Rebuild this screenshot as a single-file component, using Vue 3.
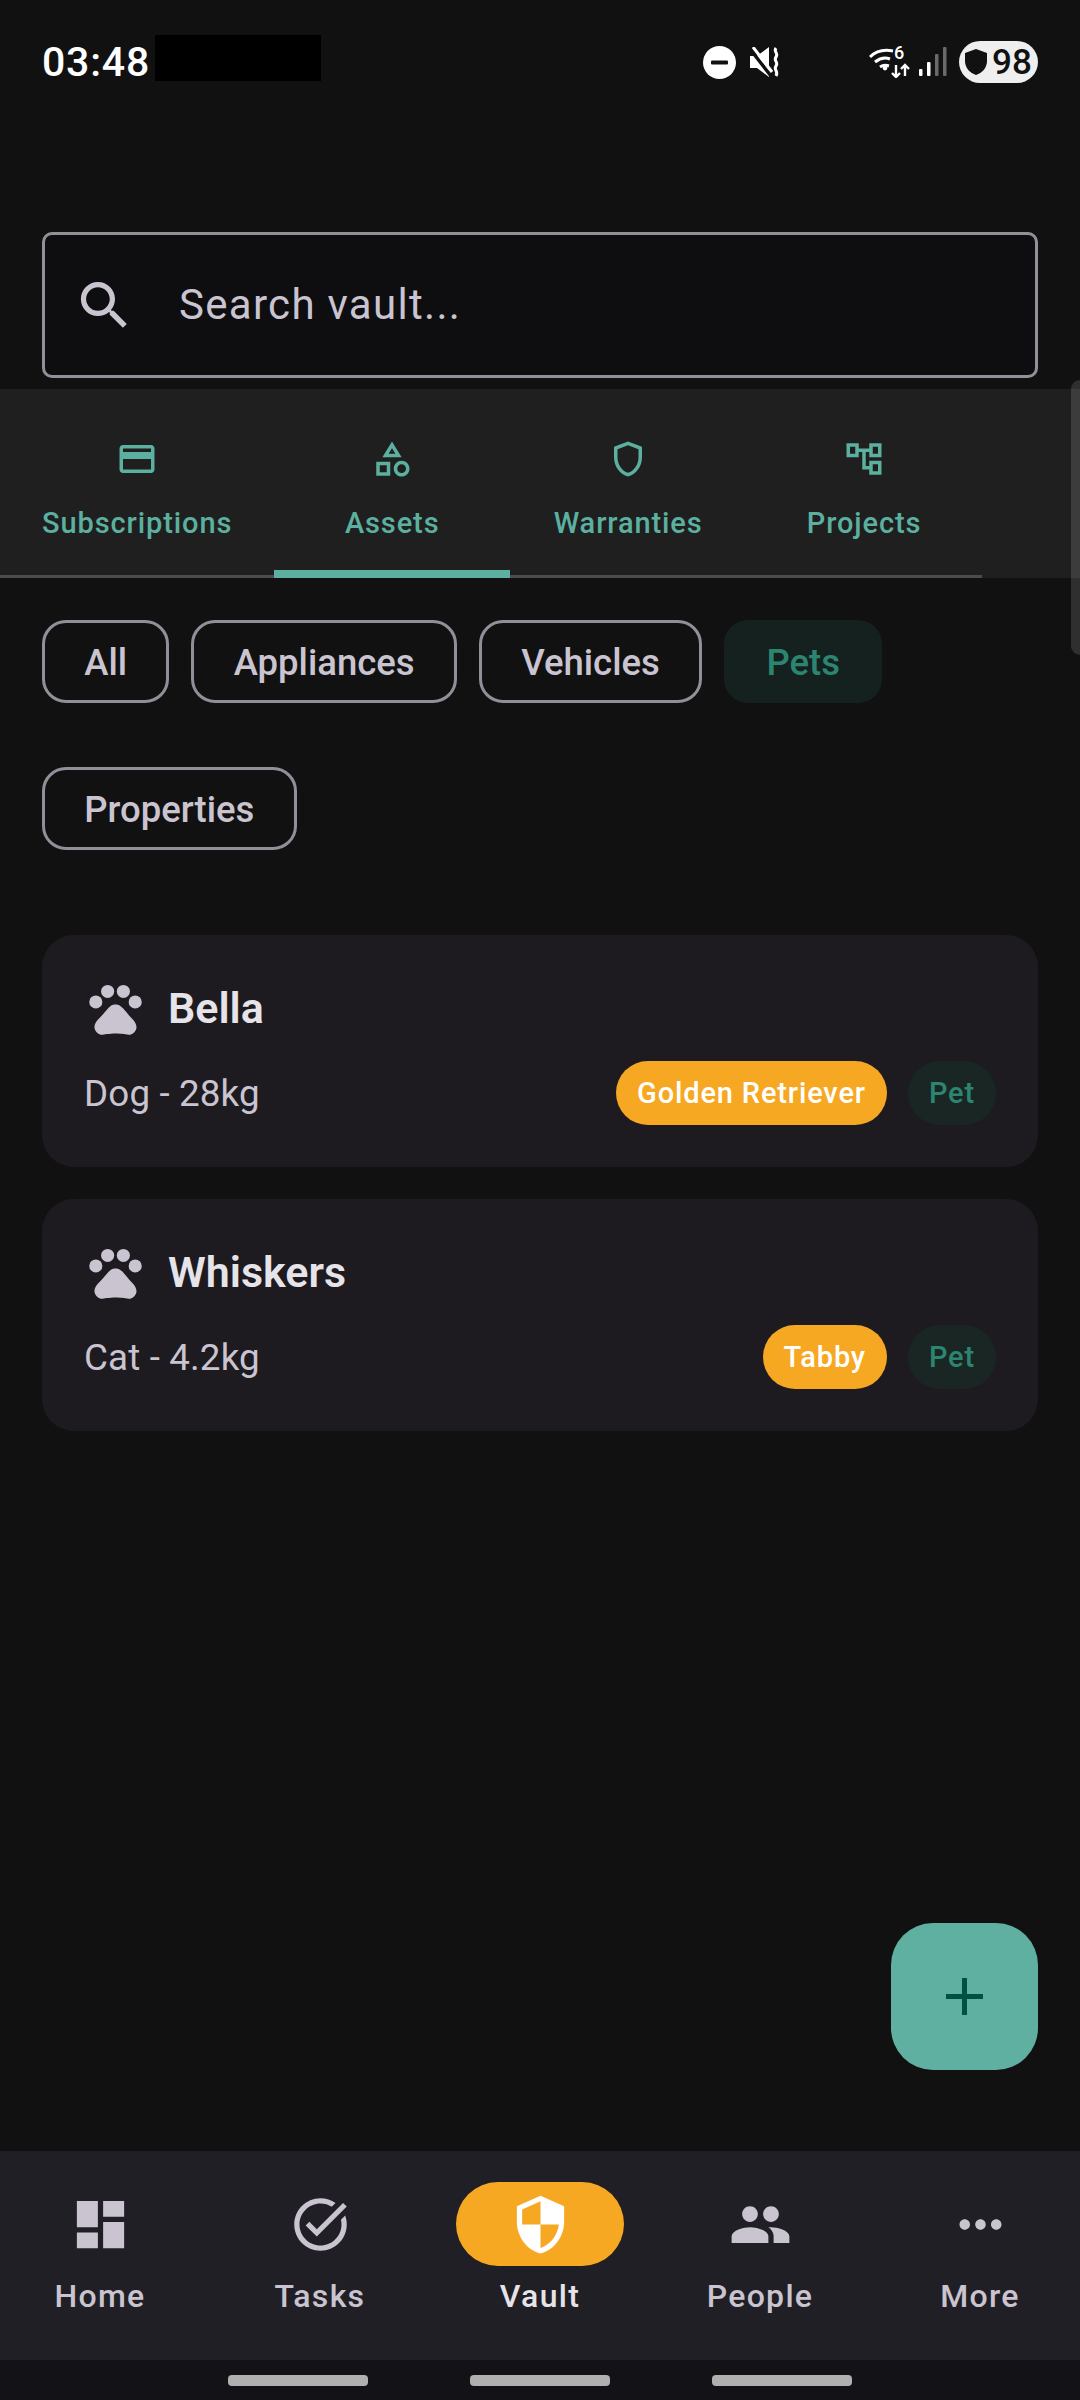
<template>
  <div class="page">
    <!-- status bar -->
    <div class="status">
      <span class="time">03:48</span>
      <span class="redacted"></span>
      <div class="status-right">
        <svg class="dnd" width="33" height="33" viewBox="0 0 33 33">
          <circle cx="16.5" cy="16.5" r="16.5" fill="#fff" />
          <rect x="8" y="14.5" width="17" height="4" rx="1" fill="#111" />
        </svg>
        <svg class="mute" width="30" height="30" viewBox="0 0 30 30">
          <path d="M0 9h7l12-9v30L7 21H0z" fill="#fff" />
          <path d="M0 2l21 27" stroke="#111" stroke-width="3.5" />
          <path d="M3 0l19 25" stroke="#fff" stroke-width="3" />
          <path d="M26 1c-3 4 3 5 0 9s3 5 0 9 3 5 0 10" fill="none" stroke="#fff" stroke-width="3" />
        </svg>
        <div class="wifi-wrap">
          <svg width="42" height="32" viewBox="0 0 42 32">
            <path d="M1 11c6-6 13-8 23-6M6 16c5-4 10-5 15-3M11 21c3-2 6-2 9-1" fill="none" stroke="#fff" stroke-width="3" />
            <circle cx="16" cy="22" r="2.4" fill="#fff" />
            <path d="M27 19v12M23 27l4 4 4-4M36 30V19M32 23l4-4 4 4" fill="none" stroke="#fff" stroke-width="2.4" />
          </svg>
          <span class="wifi-six">6</span>
        </div>
        <svg class="signal" width="28" height="30" viewBox="0 0 28 30">
          <rect x="0" y="22" width="3.5" height="7" rx="1" fill="#fff" />
          <rect x="8" y="15" width="3.5" height="14" rx="1" fill="#fff" />
          <rect x="16" y="7" width="3.5" height="22" rx="1" fill="#6a6a6a" />
          <rect x="24" y="0" width="3.5" height="29" rx="1" fill="#6a6a6a" />
        </svg>
        <div class="battery">
          <svg width="22" height="26" viewBox="0 0 22 26">
            <path d="M11 0l11 4v8c0 7-5 12-11 14C5 24 0 19 0 12V4z" fill="#111" />
          </svg>
          <span>98</span>
        </div>
      </div>
    </div>

    <div class="search">
      <svg class="search-icon" viewBox="0 0 24 24"><path :d="icons.search" /></svg>
      <input type="text" placeholder="Search vault..." />
    </div>

    <div class="tabs-wrap">
      <div class="tabs">
        <div v-for="t in tabs" :key="t.name" class="tab" :class="{ wide: t.wide, active: t.active }">
          <svg viewBox="0 0 24 24"><path :d="t.icon" /></svg>
          <span>{{ t.name }}</span>
        </div>
      </div>
    </div>

    <div class="chips">
      <button v-for="c in chips" :key="c" class="chip" :class="{ selected: c === 'Pets' }">{{ c }}</button>
    </div>

    <div class="cards">
      <div v-for="p in pets" :key="p.name" class="card">
        <div class="card-head">
          <svg viewBox="0 0 24 24">
            <circle cx="4.5" cy="9.5" r="2.5" />
            <circle cx="9" cy="5.5" r="2.5" />
            <circle cx="15" cy="5.5" r="2.5" />
            <circle cx="19.5" cy="9.5" r="2.5" />
            <path :d="icons.pad" />
          </svg>
          <span>{{ p.name }}</span>
        </div>
        <div class="card-foot">
          <span class="desc">{{ p.desc }}</span>
          <span class="badge breed">{{ p.breed }}</span>
          <span class="badge type">Pet</span>
        </div>
      </div>
    </div>

    <div class="spacer"></div>

    <button class="fab">
      <svg width="37" height="37" viewBox="0 0 37 37"><path d="M16 0h5v16h16v5H21v16h-5V21H0v-5h16z" /></svg>
    </button>

    <nav class="nav">
      <div v-for="n in nav" :key="n.name" class="nav-item" :class="{ current: n.current }">
        <div class="nav-icon">
          <svg viewBox="0 0 24 24"><path :d="n.icon" /></svg>
        </div>
        <span>{{ n.name }}</span>
      </div>
    </nav>

    <div class="gesture">
      <i></i><i></i><i></i>
    </div>

    <div class="scrollbar"></div>
  </div>
</template>

<script setup>
const icons = {
  search: 'M15.5 14h-.79l-.28-.27C15.41 12.59 16 11.11 16 9.5 16 5.91 13.09 3 9.5 3S3 5.91 3 9.5 5.91 16 9.5 16c1.61 0 3.09-.59 4.23-1.57l.27.28v.79l5 4.99L20.49 19l-4.99-5zm-6 0C7.01 14 5 11.99 5 9.5S7.01 5 9.5 5 14 7.01 14 9.5 11.99 14 9.5 14z',
  pad: 'M17.34 14.86c-.87-1.02-1.6-1.89-2.48-2.91-.46-.54-1.05-1.08-1.75-1.32-.11-.04-.22-.07-.33-.09-.25-.04-.52-.04-.78-.04s-.53 0-.79.05c-.11.02-.22.05-.33.09-.7.24-1.28.78-1.75 1.32-.87 1.02-1.6 1.89-2.48 2.91-1.31 1.31-2.92 2.76-2.62 4.79.29 1.02 1.02 2.03 2.33 2.32.73.15 3.06-.44 5.54-.44h.18c2.48 0 4.81.58 5.54.44 1.31-.29 2.04-1.31 2.33-2.32.31-2.04-1.3-3.49-2.61-4.8z'
}

const tabs = [
  { name: 'Subscriptions', icon: 'M20 4H4c-1.11 0-1.99.89-1.99 2L2 18c0 1.11.89 2 2 2h16c1.11 0 2-.89 2-2V6c0-1.11-.89-2-2-2zm0 14H4v-6h16v6zm0-10H4V6h16v2z' },
  { name: 'Assets', wide: true, active: true, icon: 'M12 2l-5.5 9h11L12 2zm0 3.84L13.93 9h-3.87L12 5.84zM17.5 13c-2.49 0-4.5 2.01-4.5 4.5s2.01 4.5 4.5 4.5 4.5-2.01 4.5-4.5-2.01-4.5-4.5-4.5zm0 7c-1.38 0-2.5-1.12-2.5-2.5s1.12-2.5 2.5-2.5 2.5 1.12 2.5 2.5-1.12 2.5-2.5 2.5zM3 21.5h8v-8H3v8zm2-6h4v4H5v-4z' },
  { name: 'Warranties', wide: true, icon: 'M12 2L4 5v6.09c0 5.05 3.41 9.76 8 10.91 4.59-1.15 8-5.86 8-10.91V5l-8-3zm6 9.09c0 4-2.55 7.7-6 8.83-3.45-1.13-6-4.82-6-8.83v-4.7l6-2.25 6 2.25v4.7z' },
  { name: 'Projects', wide: true, icon: 'M22 11V3h-7v3H9V3H2v8h7V8h2v10h4v3h7v-8h-7v3h-2V8h2v3h7zM7 9H4V5h3v4zm10 6h3v4h-3v-4zm0-10h3v4h-3V5z' }
]

const chips = ['All', 'Appliances', 'Vehicles', 'Pets', 'Properties']

const pets = [
  { name: 'Bella', desc: 'Dog - 28kg', breed: 'Golden Retriever' },
  { name: 'Whiskers', desc: 'Cat - 4.2kg', breed: 'Tabby' }
]

const nav = [
  { name: 'Home', icon: 'M3 13h8V3H3v10zm0 8h8v-6H3v6zm10 0h8V11h-8v10zm0-18v6h8V3h-8z' },
  { name: 'Tasks', icon: 'M22 5.18L10.59 16.6l-4.24-4.24 1.41-1.41 2.83 2.83 10-10L22 5.18zm-2.21 5.04c.13.57.21 1.17.21 1.78 0 4.42-3.58 8-8 8s-8-3.58-8-8 3.58-8 8-8c1.58 0 3.04.46 4.28 1.25l1.44-1.44C16.1 2.67 14.13 2 12 2 6.48 2 2 6.48 2 12s4.48 10 10 10 10-4.48 10-10c0-1.19-.22-2.33-.6-3.39l-1.61 1.61z' },
  { name: 'Vault', current: true, icon: 'M12 1L3 5v6c0 5.55 3.84 10.74 9 12 5.16-1.26 9-6.45 9-12V5l-9-4zm0 10.99h7c-.53 4.12-3.28 7.79-7 8.94V12H5V6.3l7-3.11v8.8z' },
  { name: 'People', icon: 'M16 11c1.66 0 2.99-1.34 2.99-3S17.66 5 16 5c-1.66 0-3 1.34-3 3s1.34 3 3 3zm-8 0c1.66 0 2.99-1.34 2.99-3S9.66 5 8 5C6.34 5 5 6.34 5 8s1.34 3 3 3zm0 2c-2.33 0-7 1.17-7 3.5V19h14v-2.5c0-2.33-4.67-3.5-7-3.5zm8 0c-.29 0-.62.02-.97.05 1.16.84 1.97 1.97 1.97 3.45V19h6v-2.5c0-2.33-4.67-3.5-7-3.5z' },
  { name: 'More', icon: 'M6 10c-1.1 0-2 .9-2 2s.9 2 2 2 2-.9 2-2-.9-2-2-2zm12 0c-1.1 0-2 .9-2 2s.9 2 2 2 2-.9 2-2-.9-2-2-2zm-6 0c-1.1 0-2 .9-2 2s.9 2 2 2 2-.9 2-2-.9-2-2-2z' }
]
</script>

<style scoped>
.page {
  position: relative;
  display: flex;
  flex-direction: column;
  width: 1080px;
  height: 2400px;
  overflow: hidden;
  background: #111112;
  font-family: Roboto, sans-serif;
  color: #cac4d0;
}

/* status bar */
.status {
  display: flex;
  align-items: center;
  height: 124px;
  padding: 0 42px;
  flex-shrink: 0;
}
.time {
  font-size: 41px;
  font-weight: 500;
  color: #fff;
  letter-spacing: 0.8px;
}
.redacted {
  width: 166px;
  height: 46px;
  margin: -8px 0 0 5px;
  background: #000;
}
.status-right {
  display: flex;
  align-items: center;
  margin-left: auto;
}
.mute { margin-left: 14px; }
.wifi-wrap {
  position: relative;
  width: 42px;
  height: 32px;
  margin-left: 89px;
}
.wifi-wrap svg { display: block; }
.wifi-six {
  position: absolute;
  left: 25px;
  top: -3px;
  font-size: 18px;
  line-height: 20px;
  font-weight: 500;
  color: #fff;
}
.signal { margin-left: 8px; }
.battery {
  display: flex;
  align-items: center;
  gap: 5px;
  width: 79px;
  height: 42px;
  margin-left: 12px;
  padding-left: 6px;
  box-sizing: border-box;
  border-radius: 21px;
  background: #efefef;
  color: #111;
  font-size: 35px;
  font-weight: 500;
}

/* search */
.search {
  display: flex;
  align-items: center;
  gap: 43px;
  height: 146px;
  margin: 108px 42px 0;
  padding-left: 28px;
  box-sizing: border-box;
  flex-shrink: 0;
  border: 3px solid #938f99;
  border-radius: 10px;
  background: #0e0e10;
}
.search-icon {
  width: 63px;
  height: 63px;
  fill: #cac4d0;
}
.search input {
  flex: 1;
  min-width: 0;
  border: 0;
  outline: 0;
  padding: 0 0 2px;
  background: transparent;
  font-family: Roboto, sans-serif;
  font-size: 42px;
  letter-spacing: 1.3px;
  color: #cac4d0;
}
.search input::placeholder {
  color: #cac4d0;
  opacity: 1;
}

/* tabs */
.tabs-wrap {
  height: 189px;
  margin-top: 11px;
  flex-shrink: 0;
  background: #1f1f1f;
}
.tabs {
  display: flex;
  width: 982px;
  height: 189px;
  box-sizing: border-box;
  border-bottom: 3px solid #4c4c4c;
}
.tab {
  position: relative;
  display: flex;
  flex-direction: column;
  align-items: center;
  gap: 23px;
  padding: 49px 42px 0;
  box-sizing: border-box;
  color: #5bb09f;
  font-size: 29px;
  font-weight: 500;
  letter-spacing: 0.9px;
  line-height: 40px;
}
.tab.wide { width: 236px; }
.tab svg {
  width: 42px;
  height: 42px;
  fill: #5bb09f;
}
.tab.active::after {
  content: '';
  position: absolute;
  left: 0;
  right: 0;
  bottom: -3px;
  height: 8px;
  background: #5bb09f;
}

/* filter chips */
.chips {
  display: flex;
  flex-wrap: wrap;
  gap: 64px 22px;
  padding: 42px 42px 0;
  flex-shrink: 0;
}
.chip {
  height: 83px;
  padding: 2px 39.3px 0;
  border: 3px solid #938f99;
  border-radius: 24px;
  background: transparent;
  font-family: Roboto, sans-serif;
  font-size: 36.5px;
  font-weight: 500;
  color: #cac4d0;
}
.chip.selected {
  border-color: #15211e;
  background: #15211e;
  color: #2b8570;
}

/* cards */
.cards {
  display: flex;
  flex-direction: column;
  gap: 32px;
  margin: 85px 42px 0;
  flex-shrink: 0;
}
.card {
  padding: 42px;
  border-radius: 32px;
  background: #1d1b20;
}
.card-head {
  display: flex;
  align-items: center;
  gap: 21px;
  height: 63px;
  font-size: 43px;
  font-weight: 600;
  color: #e6e4e9;
}
.card-head span { padding-bottom: 2px; }
.card-head svg {
  width: 63px;
  height: 63px;
  fill: #cac4d0;
}
.card-foot {
  display: flex;
  align-items: center;
  gap: 21px;
  height: 64px;
  margin-top: 21px;
}
.desc {
  margin-right: auto;
  font-size: 36.75px;
  letter-spacing: 0.15px;
  color: #cac4d0;
}
.badge {
  display: flex;
  align-items: center;
  height: 64px;
  padding: 0 21px;
  border-radius: 32px;
  font-size: 29px;
  font-weight: 500;
  letter-spacing: 0.85px;
}
.breed {
  background: #f7a823;
  color: #fff;
}
.type {
  background: #1a2624;
  color: #2b8570;
}

.spacer { flex: 1; }

/* floating button */
.fab {
  position: absolute;
  right: 42px;
  top: 1923px;
  display: flex;
  align-items: center;
  justify-content: center;
  width: 147px;
  height: 147px;
  padding: 0;
  border: 0;
  border-radius: 42px;
  background: #5fb0a0;
}
.fab svg { fill: #00513f; }

/* bottom nav */
.nav {
  display: flex;
  gap: 20px;
  height: 209px;
  flex-shrink: 0;
  background: #211f26;
}
.nav-item {
  display: flex;
  flex-direction: column;
  align-items: center;
  width: 200px;
  padding-top: 31px;
  box-sizing: border-box;
  font-size: 32px;
  font-weight: 500;
  letter-spacing: 1.3px;
  color: #cac4d0;
}
.nav-icon {
  display: flex;
  align-items: center;
  justify-content: center;
  width: 168px;
  height: 84px;
  margin-bottom: 11px;
  border-radius: 42px;
}
.nav-icon svg {
  width: 63px;
  height: 63px;
  fill: #cac4d0;
}
.current { color: #e6e4e9; }
.current .nav-icon { background: #f7a823; }
.current .nav-icon svg { fill: #fff; }

.gesture {
  position: relative;
  display: flex;
  justify-content: center;
  gap: 102px;
  height: 40px;
  padding-top: 15px;
  box-sizing: border-box;
  flex-shrink: 0;
  background: #131317;
}
.gesture i {
  display: block;
  width: 140px;
  height: 11px;
  border-radius: 4px;
  background: #b0b0b0;
}

.scrollbar {
  position: absolute;
  top: 380px;
  right: 0;
  width: 9px;
  height: 275px;
  border-radius: 9px 0 0 9px;
  background: rgba(255, 255, 255, 0.13);
}
</style>
